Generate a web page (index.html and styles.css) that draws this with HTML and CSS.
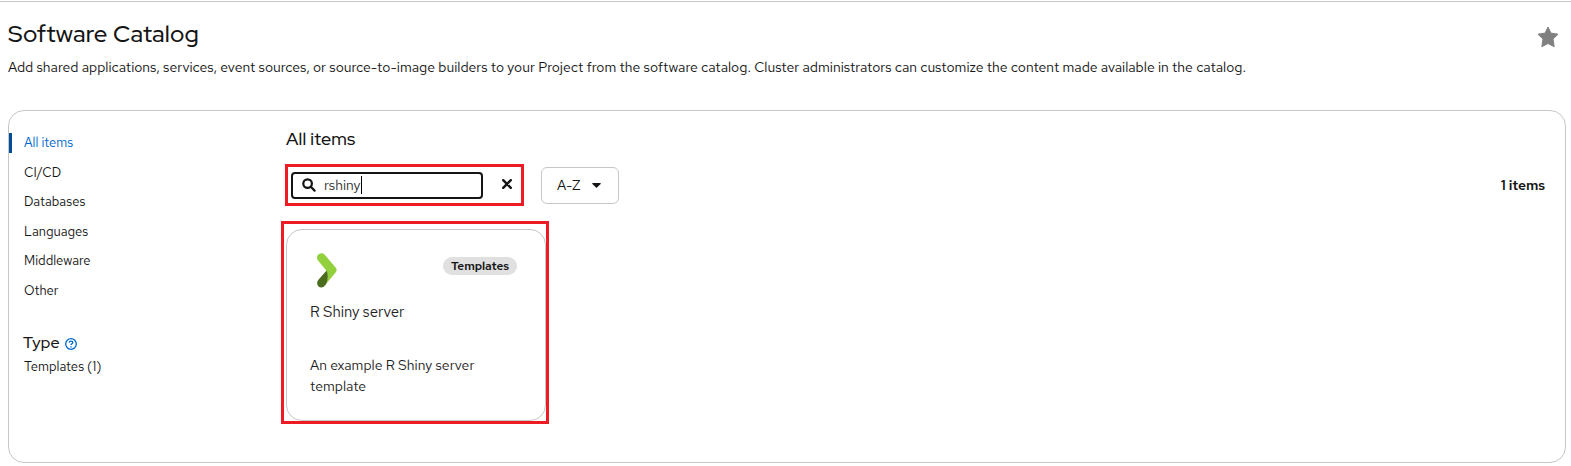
FILE: index.html
```html
<!DOCTYPE html>
<html lang="en">
<head>
<meta charset="utf-8">
<title>Software Catalog</title>
<link rel="stylesheet" href="styles.css">
</head>
<body>
<header class="page-header">
  <div class="intro">
    <h1 class="title">Software Catalog</h1>
    <p class="description">Add shared applications, services, event sources, or source-to-image builders to your Project from the software catalog. Cluster administrators can customize the content made available in the catalog.</p>
  </div>
  <svg class="star" viewBox="0 0 22 22"><path d="M11 1 L14 7.200 L21 8.200 L16 13.100 L17.200 20.700 L11 17.500 L4.800 20.700 L6 13.100 L1 8.200 L8 7.200 Z"/></svg>
</header>
<main class="catalog">
  <aside class="sidebar">
    <nav class="categories">
      <a class="category active">All items</a>
      <a class="category">CI/CD</a>
      <a class="category">Databases</a>
      <a class="category">Languages</a>
      <a class="category">Middleware</a>
      <a class="category">Other</a>
    </nav>
    <h2 class="filter-title"><span>Type</span>
      <svg class="help" viewBox="0 0 12 12"><circle cx="6" cy="6" r="5.300"/><path d="M4.200 4.600 Q4.400 3.100 6 3.100 Q7.800 3.100 7.800 4.500 Q7.800 5.300 6.800 5.800 Q6 6.200 6 7.100 M6 8.200 V9.500"/></svg>
    </h2>
    <a class="filter-item">Templates (1)</a>
  </aside>
  <section class="content">
    <h2 class="heading">All items</h2>
    <div class="toolbar">
      <div class="search highlight">
        <div class="search-input">
          <svg class="magnifier" viewBox="0 0 14 14"><circle cx="5.600" cy="5.600" r="4.300"/><path d="M8.800 8.800 L12.600 12.600"/></svg>
          <span class="query">rshiny</span><i class="caret"></i>
        </div>
        <svg class="clear" viewBox="0 0 10 10"><path d="M1.200 1.200 L8.800 8.800 M8.800 1.200 L1.200 8.800"/></svg>
      </div>
      <button class="sort"><span>A-Z</span><svg class="arrow" viewBox="0 0 9 5"><path d="M0.500 0 H8.500 Q9 0.400 8.600 0.900 L5 4.600 Q4.500 5 4 4.600 L0.400 0.900 Q0 0.400 0.500 0 Z"/></svg></button>
      <div class="count">1 items</div>
    </div>
    <div class="card-frame highlight">
      <article class="card">
        <div class="card-top">
          <svg class="logo" viewBox="0 0 20 35"><path class="logo-light" d="M0 4.500 C0 1 4.500 -1.500 7.500 1.500 L18.800 14.800 Q20.500 17 18.800 19.200 L9 31 C11 26 11.200 21 9.300 17.500 L1 7.500 Q0 6 0 4.500 Z"/><path class="logo-dark" d="M9.600 17.500 L1.200 27 C-1.200 30 0.800 34.500 4.300 34.500 Q6.500 34.500 8 32.500 L9.200 31 C11 26.500 11.500 21.500 9.600 17.500 Z"/></svg>
          <span class="badge">Templates</span>
        </div>
        <h3 class="card-title">R Shiny server</h3>
        <p class="card-text">An example R Shiny server<br>template</p>
      </article>
    </div>
  </section>
</main>
</body>
</html>
```
FILE: styles.css
```css
* { box-sizing: border-box; }
body {
  margin: 0;
  height: 466px;
  overflow: hidden;
  border-top: 1px solid #fff;
  background: #fff;
  color: #151515;
  font-family: "Red Hat Text", Lato, sans-serif;
  font-size: 14px;
}
h1, h2, h3, p { margin: 0; font-weight: 400; }
svg { display: block; flex: none; }
.page-header {
  display: flex;
  justify-content: space-between;
  height: 109px;
  padding: 18px 12px 0 8px;
  border-top: 1px solid #c7c7c7;
}
.title, .heading, .filter-title { font-family: "Red Hat Display", "Red Hat Text", Lato, sans-serif; font-weight: 500; letter-spacing: 0.150px; }
.title { font-size: 24px; line-height: 28px; letter-spacing: 0.200px; }
.description { margin-top: 9px; line-height: 21px; white-space: nowrap; }
.star { width: 22px; height: 22px; margin-top: 6px; fill: #808080; stroke: #808080; stroke-width: 1; stroke-linejoin: round; }
.catalog {
  display: flex;
  width: 1558px;
  height: 353px;
  margin-left: 8px;
  border: 1px solid #c7c7c7;
  border-radius: 16px;
}
.sidebar { width: 272px; padding-top: 22px; font-size: 13px; }
.categories { display: grid; gap: 9.600px; }
.category { display: block; height: 20px; padding-left: 15px; line-height: 20px; }
.category.active { padding-left: 12px; border-left: 3px solid #004d99; color: #0066cc; }
.filter-title { display: flex; align-items: center; gap: 5px; height: 24px; margin-top: 30px; padding-left: 14px; font-size: 16px; }
.help { width: 12px; height: 12px; margin-top: 2px; fill: none; stroke: #0066cc; stroke-width: 1.300; }
.filter-item { display: block; padding-left: 15px; line-height: 24px; }
.content { flex: 1; padding: 16px 20px 0 0; }
.heading { padding-left: 5px; font-size: 18px; line-height: 24px; }
.toolbar { display: flex; align-items: center; height: 42px; margin-top: 13px; padding-left: 4px; }
.highlight { border: 3px solid #ed1c24; }
.search { display: flex; align-items: center; width: 239px; height: 42px; padding-left: 3px; }
.search-input { display: flex; align-items: center; width: 192px; height: 27px; padding-left: 9px; border: 2px solid #151515; border-radius: 4px; }
.magnifier { width: 14px; height: 14px; margin-top: -1px; fill: none; stroke: #151515; stroke-width: 2.200; stroke-linecap: round; }
.query { margin-left: 8px; color: #333; }
.caret { width: 1px; height: 18px; background: #000; }
.clear { width: 10px; height: 10px; margin: -2px 0 0 19px; fill: none; stroke: #151515; stroke-width: 2.400; stroke-linecap: round; }
.sort {
  display: flex;
  align-items: center;
  width: 78px;
  height: 37px;
  margin-left: 17px;
  padding: 0 0 0 15px;
  border: 1px solid #c7c7c7;
  border-radius: 6px;
  background: #fff;
  color: #151515;
  font: inherit;
}
.arrow { width: 9px; height: 5px; margin-left: auto; margin-right: 17px; fill: #151515; }
.count { margin-left: auto; font-weight: 600; letter-spacing: -0.100px; }
.card-frame { width: 268px; height: 203px; margin-top: 15px; padding: 5px 0 0 2px; }
.card { width: 260px; height: 192px; padding: 23px 28px 0 23px; border: 1px solid #c7c7c7; border-radius: 16px; color: #1f1f1f; }
.card-top { display: flex; justify-content: space-between; padding-left: 7px; }
.logo { width: 20px; height: 35px; }
.logo-light { fill: #92d13d; }
.logo-dark { fill: #4b6d1e; }
.badge { width: 74px; height: 18px; margin-top: 4px; border-radius: 9px; background: #e0e0e0; color: #151515; font-size: 12px; font-weight: 600; letter-spacing: -0.100px; line-height: 18px; text-align: center; }
.card-title { margin-top: 13px; font-size: 15px; line-height: 22px; letter-spacing: -0.050px; }
.card-text { margin-top: 32px; line-height: 21px; white-space: nowrap; }
```
